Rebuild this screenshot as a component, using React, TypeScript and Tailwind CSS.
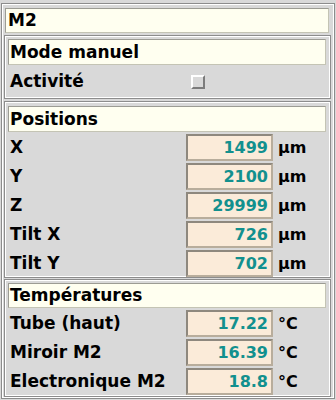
import React from 'react';

const font = { fontFamily: '"DejaVu Sans", "Liberation Sans", sans-serif' };

type Row = { label: string; value: string; unit: string };

const positions: Row[] = [
  { label: 'X', value: '1499', unit: 'µm' },
  { label: 'Y', value: '2100', unit: 'µm' },
  { label: 'Z', value: '29999', unit: 'µm' },
  { label: 'Tilt X', value: '726', unit: 'µm' },
  { label: 'Tilt Y', value: '702', unit: 'µm' },
];

const temperatures: Row[] = [
  { label: 'Tube (haut)', value: '17.22', unit: '°C' },
  { label: 'Miroir M2', value: '16.39', unit: '°C' },
  { label: 'Electronique M2', value: '18.8', unit: '°C' },
];

const Header: React.FC<{ title: string; className?: string }> = ({ title, className = '' }) => (
  <div
    className={`flex items-center bg-[#fffff0] border border-t-[#9c9c94] border-l-[#9c9c94] border-b-[#c4c4b4] border-r-[#c4c4b4] pl-[1px] text-[17px] font-bold text-black leading-none ${className}`}
  >
    {title}
  </div>
);

const Frame: React.FC<{ children: React.ReactNode; className?: string }> = ({ children, className = '' }) => (
  <div className={`border border-[#8c8c8c] ${className}`}>
    <div className="border border-white h-full flex flex-col">{children}</div>
  </div>
);

const ValueRow: React.FC<{ row: Row }> = ({ row }) => (
  <div className="flex items-center h-[29px]">
    <div className="w-[178px] pl-[2px] text-[17px] font-bold text-black">{row.label}</div>
    <div className="w-[87px] h-[27px] flex items-center justify-end pr-[3px] bg-[#fbebd9] border-2 border-t-[#8e887e] border-l-[#8e887e] border-b-[#b8ad9c] border-r-[#b8ad9c] text-[16px] font-bold text-[#12908e]">
      {row.value}
    </div>
    <div className="pl-[5px] text-[16px] font-bold text-black">{row.unit}</div>
  </div>
);

export default function App() {
  return (
    <div className="w-[336px] h-[400px] bg-[#d9d9d9] pt-[3px] px-[1px] overflow-hidden" style={font}>
      <Frame className="h-[396px]">
        <div className="px-[1px]">
          <Header title="M2" className="mt-[3px] ml-[1px] mr-[3px] h-[25px] pl-[2px]" />

          <Frame className="mt-[2px] mr-[1px] h-[64px]">
            <div className="px-[2px] pt-[2px]">
              <Header title="Mode manuel" className="h-[26px] mr-[1px]" />
              <div className="flex items-center h-[30px] mt-[2px]">
                <div className="w-[183px] pl-[2px] text-[17px] font-bold text-black">Activité</div>
                <div className="w-[14px] h-[14px] border-2 border-t-white border-l-white border-b-[#7c7c7c] border-r-[#7c7c7c] bg-[#d9d9d9]" />
              </div>
            </div>
          </Frame>

          <Frame className="mt-[2px] mr-[1px] h-[177px]">
            <div className="px-[2px] pt-[3px]">
              <Header title="Positions" className="h-[26px] mr-[1px]" />
              <div className="pt-[1px]">
                {positions.map((r) => (
                  <ValueRow key={r.label} row={r} />
                ))}
              </div>
            </div>
          </Frame>

          <Frame className="mt-[1px] mr-[1px] h-[118px]">
            <div className="px-[2px] pt-[2px]">
              <Header title="Températures" className="h-[25px] mr-[1px]" />
              <div className="pt-[1px]">
                {temperatures.map((r) => (
                  <ValueRow key={r.label} row={r} />
                ))}
              </div>
            </div>
          </Frame>
        </div>
      </Frame>
    </div>
  );
}
